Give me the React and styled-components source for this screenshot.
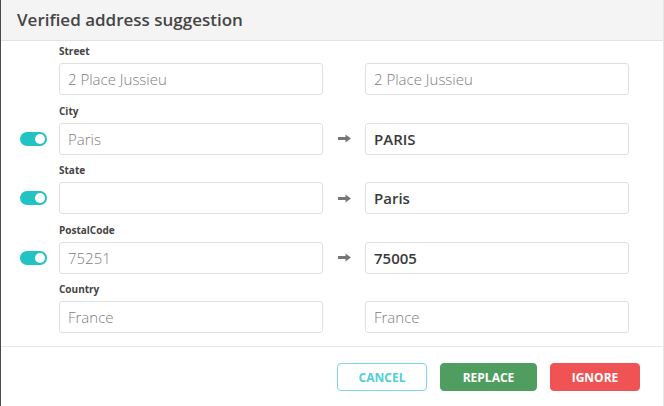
import React from 'react';
import styled, { createGlobalStyle } from 'styled-components';

const Global = createGlobalStyle`
  html, body { margin: 0; padding: 0; background: #fff; }
  body { font-family: "Open Sans", "Noto Sans", sans-serif; }
  * { box-sizing: border-box; }
`;

const fields = [
  { label: 'Street', from: '2 Place Jussieu', to: '2 Place Jussieu' },
  { label: 'City', from: 'Paris', to: 'PARIS', toggle: true },
  { label: 'State', from: '', to: 'Paris', toggle: true },
  { label: 'PostalCode', from: '75251', to: '75005', toggle: true },
  { label: 'Country', from: 'France', to: 'France' },
];

const Arrow = () => (
  <svg width="13" height="9" viewBox="0 0 13 9">
    <path d="M0 3h7.5V0.5L13 4.5 7.5 8.5V6H0z" fill="#777" />
  </svg>
);

const Dialog = () => (
  <Modal>
    <Header>
      <Title>Verified address suggestion</Title>
    </Header>
    <Body>
      {fields.map((f) => (
        <Field key={f.label}>
          <Label>{f.label}</Label>
          <Row>
            <ToggleCell>{f.toggle && <Toggle />}</ToggleCell>
            <Input $muted>{f.from}</Input>
            <ArrowCell>{f.toggle && <Arrow />}</ArrowCell>
            <Input $muted={!f.toggle}>{f.to}</Input>
          </Row>
        </Field>
      ))}
    </Body>
    <Footer>
      <Button $variant="cancel">Cancel</Button>
      <Button $variant="replace" $w={97}>Replace</Button>
      <Button $variant="ignore">Ignore</Button>
    </Footer>
  </Modal>
);

export default function App() {
  return (
    <>
      <Global />
      <Dialog />
    </>
  );
}

const Modal = styled.div`
  width: 664px;
  height: 406px;
  background: #fff;
  border-left: 1px solid #4a4a4a;
  border-right: 1px solid #e6e6e6;
  display: flex;
  flex-direction: column;
`;

const Header = styled.div`
  flex-shrink: 0;
  height: 41px;
  background: #f4f4f4;
  border-bottom: 1px solid #e2e2e2;
  display: flex;
  align-items: center;
  padding: 0 0 2px 16px;
`;

const Title = styled.h1`
  margin: 0;
  font-size: 17px;
  font-weight: 600;
  color: #454545;
`;

const Body = styled.div`
  flex-shrink: 0;
  display: flex;
  flex-direction: column;
  gap: 5.5px;
  padding: 0 0 13px 19px;
  border-bottom: 1px solid #e6e6e6;
`;

const Field = styled.div`
  display: flex;
  flex-direction: column;
`;

const Label = styled.div`
  padding: 4px 0 0 39px;
  margin-bottom: 6px;
  height: 16px;
  line-height: 12px;
  font-size: 10px;
  font-weight: 700;
  color: #444;
`;

const Row = styled.div`
  display: grid;
  grid-template-columns: 39px 264px 42px 264px;
  align-items: center;
`;

const ToggleCell = styled.div`
  display: flex;
  align-items: center;
`;

const Toggle = styled.span`
  position: relative;
  width: 27px;
  height: 14px;
  border-radius: 7px;
  background: #22c3c3;
  &::after {
    content: '';
    position: absolute;
    right: 2px;
    top: 2px;
    width: 10px;
    height: 10px;
    border-radius: 50%;
    background: #fff;
  }
`;

const ArrowCell = styled.div`
  display: flex;
  justify-content: center;
  align-items: center;
`;

const Input = styled.div`
  height: 32px;
  border: 1px solid #e0e0e0;
  border-radius: 3px;
  padding: 0 8px;
  display: flex;
  align-items: center;
  font-size: 15px;
  font-weight: ${(p) => (p.$muted ? 300 : 600)};
  color: ${(p) => (p.$muted ? '#7c7c7c' : '#3a3a3a')};
`;

const colors = {
  cancel: { bg: '#fff', fg: '#4fd0d6', border: '#7fd9de' },
  replace: { bg: '#4f9e5f', fg: '#fff', border: '#4f9e5f' },
  ignore: { bg: '#ef5354', fg: '#fff', border: '#ef5354' },
};

const Footer = styled.div`
  flex-shrink: 0;
  display: flex;
  justify-content: flex-end;
  gap: 13px;
  padding: 16px 23px 0 0;
`;

const Button = styled.button`
  width: ${(p) => p.$w || 90}px;
  height: 28px;
  border-radius: 4px;
  font-family: inherit;
  font-size: 12px;
  font-weight: 700;
  text-transform: uppercase;
  background: ${(p) => colors[p.$variant].bg};
  color: ${(p) => colors[p.$variant].fg};
  border: 1px solid ${(p) => colors[p.$variant].border};
  padding: 0;
`;
